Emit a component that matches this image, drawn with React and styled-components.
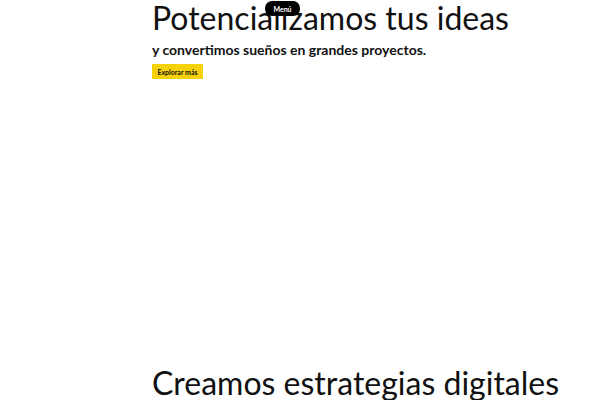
import React from 'react'
import styled, { createGlobalStyle } from 'styled-components'

const GlobalStyle = createGlobalStyle`
    html, body {
        margin: 0;
        padding: 0;
        background: #fff;
        font-family: Lato, "Noto Sans", sans-serif;
        color: #111;
        overflow: hidden;
    }
`

const Page = styled.div`
    position: relative;
    width: 600px;
    height: 400px;
    overflow: hidden;
`

// fixed menu pill that floats over the hero
const MenuButton = styled.button`
    position: absolute;
    top: 1px;
    left: 265px;
    width: 35px;
    height: 15px;
    border: none;
    border-radius: 7px;
    background: #000;
    color: #fff;
    font-family: Lato, sans-serif;
    font-size: 7px;
    font-weight: 700;
    padding: 0;
    z-index: 5;
`

const Hero = styled.section`
    height: 365px;
    padding-left: 152px;
    display: flex;
    flex-direction: column;
    align-items: flex-start;
`

const Title = styled.h1`
    margin: 0;
    font-size: 32px;
    font-weight: 400;
    line-height: 36px;
    white-space: nowrap;
`

const Subtitle = styled.p`
    margin: 3px 0 0;
    font-size: 14px;
    font-weight: 700;
    line-height: 22px;
    white-space: nowrap;
`

const Cta = styled.a`
    margin-top: 3px;
    display: inline-flex;
    align-items: center;
    justify-content: center;
    width: 51px;
    height: 15px;
    background: #f6d20c;
    color: #111;
    font-size: 7px;
    font-weight: 700;
    text-decoration: none;
`

const Section = styled.section`
    padding-left: 152px;
`

const SectionTitle = styled.h2`
    margin: 0;
    font-size: 32px;
    font-weight: 400;
    line-height: 36px;
    white-space: nowrap;
`

const App = () => {
    return (
        <>
            <GlobalStyle />
            <Page>
                <MenuButton>Menú</MenuButton>
                <Hero>
                    <Title>Potencializamos tus ideas</Title>
                    <Subtitle>y convertimos sueños en grandes proyectos.</Subtitle>
                    <Cta href="#">Explorar más</Cta>
                </Hero>
                <Section>
                    <SectionTitle>Creamos estrategias digitales</SectionTitle>
                </Section>
            </Page>
        </>
    )
}

export default App
